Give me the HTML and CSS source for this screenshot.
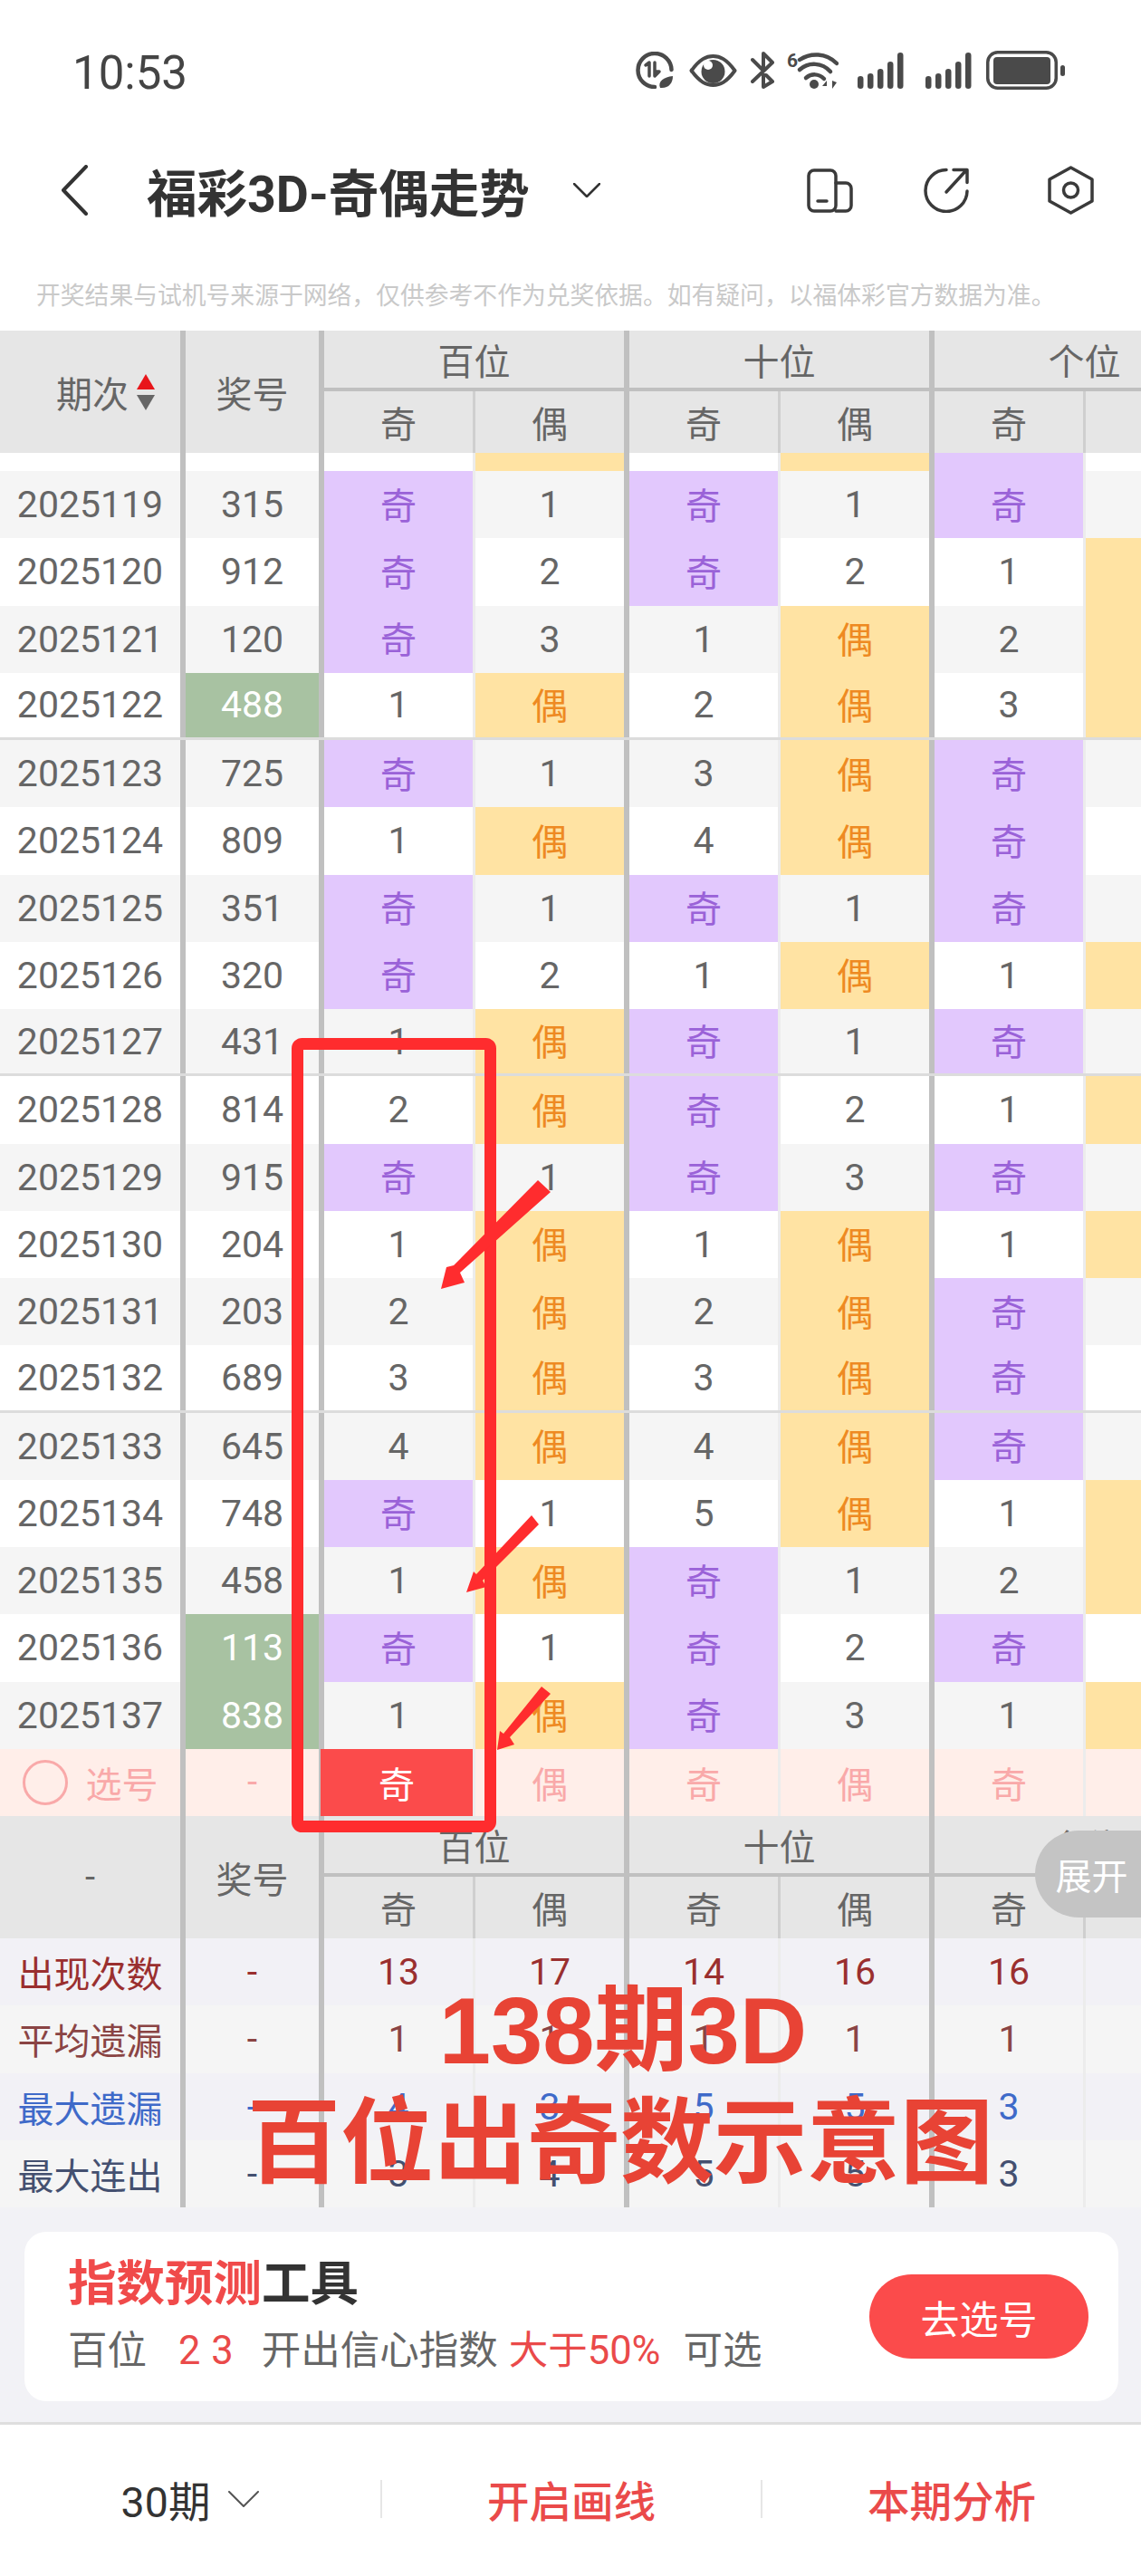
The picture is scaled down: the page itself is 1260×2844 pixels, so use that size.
FILE: index.html
```html
<!DOCTYPE html>
<html lang="zh-CN">
<head>
    <meta charset="UTF-8">
    <meta name="viewport" content="width=device-width, initial-scale=1.0">
    <title>福彩3D-奇偶走势</title>
    <link rel="stylesheet" href="styles.css">
</head>
<body>
<div class="page">

    <!-- status bar -->
    <div class="status">
        <span class="time">10:53</span>
        <div class="status-icons">
            <svg class="ic-saver" width="42" height="41" viewBox="0 0 42 41" fill="none" stroke="#4a4a4a" stroke-width="4.5" stroke-linecap="round" stroke-linejoin="round">
                <path d="M21 39A18.5 18.5 0 1 1 39.500 20"/>
                <path d="M11 15l4-3v15M21 12v15l5-5h-5" stroke-width="3.500"/>
                <path d="M27 40c-3-7 4-12 14-13 0 8-5 14-14 13z" fill="#4a4a4a" stroke="none"/>
            </svg>
            <svg class="ic-eye" width="53" height="36" viewBox="0 0 53 36" fill="none" stroke="#4a4a4a" stroke-width="4">
                <path d="M2.500 18C12 5 19 2 26.500 2S41 5 50.500 18C41 31 34 34 26.500 34S12 31 2.500 18z" stroke-linejoin="round"/>
                <circle cx="26.500" cy="19" r="13" fill="#4a4a4a" stroke="none"/>
                <circle cx="21" cy="12" r="5" fill="#fff" stroke="none"/>
            </svg>
            <svg width="26" height="41" viewBox="0 0 26 41" fill="none" stroke="#4a4a4a" stroke-width="4" stroke-linecap="round" stroke-linejoin="round">
                <path d="M2 9l12 12V2l10 10L2 33"/>
                <path d="M14 26v13l10-6-7-7z"/>
            </svg>
            <svg class="ic-wifi" width="57" height="41" viewBox="0 0 57 41" fill="none" stroke="#4a4a4a" stroke-width="4.500" stroke-linecap="round">
                <text class="wifi-six" x="0" y="17">6</text>
                <path d="M14 9C26 1 43 1 55 13"/>
                <path d="M14 20C24 11 39 12 48 22"/>
                <path d="M21 29c6-5 14-5 20 1"/>
                <circle cx="30" cy="36" r="5" fill="#4a4a4a" stroke="none"/>
                <path d="M44 32l-5 6h5zM50 32v9l5-7z" fill="#4a4a4a" stroke="none"/>
            </svg>
            <svg class="ic-signal" width="51" height="41" viewBox="0 0 51 41" fill="#4a4a4a">
                <rect x="0" y="27" width="6.500" height="14" rx="3.200"/>
                <rect x="11" y="24" width="6.500" height="17" rx="3.200"/>
                <rect x="22" y="19" width="6.500" height="22" rx="3.200"/>
                <rect x="33" y="11" width="6.500" height="30" rx="3.200"/>
                <rect x="44" y="1" width="6.500" height="40" rx="3.200"/>
            </svg>
            <svg class="ic-signal ic-signal-two" width="51" height="41" viewBox="0 0 51 41" fill="#4a4a4a">
                <rect x="0" y="27" width="6.500" height="14" rx="3.200"/>
                <rect x="11" y="24" width="6.500" height="17" rx="3.200"/>
                <rect x="22" y="19" width="6.500" height="22" rx="3.200"/>
                <rect x="33" y="11" width="6.500" height="30" rx="3.200"/>
                <rect x="44" y="1" width="6.500" height="40" rx="3.200"/>
            </svg>
            <svg class="ic-battery" width="87" height="43" viewBox="0 0 87 43" fill="#4a4a4a">
                <rect x="1.750" y="1.750" width="75.500" height="39.500" rx="11" fill="none" stroke="#4a4a4a" stroke-width="3.500"/>
                <rect x="8" y="7" width="63" height="30" rx="4"/>
                <rect x="82" y="16" width="5" height="12" rx="2.500"/>
            </svg>
        </div>
    </div>

    <!-- title bar -->
    <div class="nav">
        <svg class="nav-back" width="30" height="56" viewBox="0 0 30 56" fill="none" stroke="#333" stroke-width="4" stroke-linecap="round" stroke-linejoin="round">
            <path d="M28 2L3 28l25 26"/>
        </svg>
        <h1 class="nav-title">福彩3D-奇偶走势</h1>
        <svg class="nav-drop" width="30" height="16" viewBox="0 0 30 16" fill="none" stroke="#333" stroke-width="2.500" stroke-linecap="round" stroke-linejoin="round">
            <path d="M1 1l14 14L29 1"/>
        </svg>
        <div class="nav-tools">
            <svg width="51" height="49" viewBox="0 0 51 49" fill="none" stroke="#3a3a3a" stroke-width="3.500" stroke-linecap="round">
                <rect x="2" y="2" width="30" height="45" rx="6"/>
                <path d="M32 16h11a6 6 0 0 1 6 6v19a6 6 0 0 1-6 6H32"/>
                <path d="M12 36h10"/>
            </svg>
            <svg width="50" height="50" viewBox="0 0 50 50" fill="none" stroke="#3a3a3a" stroke-width="3.500" stroke-linecap="round" stroke-linejoin="round">
                <path d="M25 2.500A23 23 0 1 0 48 26"/>
                <path d="M25 27L47 3M33 2.500h15v14"/>
            </svg>
            <svg class="nav-hex" width="51" height="54" viewBox="0 0 51 54" fill="none" stroke="#3a3a3a" stroke-width="3.500" stroke-linejoin="round">
                <path d="M25.500 2L49 15v24L25.500 52 2 39V15z"/>
                <circle cx="25.500" cy="27" r="8"/>
            </svg>
        </div>
    </div>

    <p class="note">开奖结果与试机号来源于网络，仅供参考不作为兑奖依据。如有疑问，以福体彩官方数据为准。</p>

    <!-- trend table head -->
    <div class="head">
        <div class="head-side head-period">期次<span class="sort"><i class="sort-up"></i><i class="sort-down"></i></span></div>
        <div class="head-side">奖号</div>
        <div class="group"><div class="group-name">百位</div><div class="group-sub"><span>奇</span><span>偶</span></div></div>
        <div class="group"><div class="group-name">十位</div><div class="group-sub"><span>奇</span><span>偶</span></div></div>
        <div class="group"><div class="group-name">个位</div><div class="group-sub"><span>奇</span><span></span></div></div>
    </div>

    <!-- trend rows -->
    <div class="body">
        <div class="row row-cut"><div></div><div></div><div></div><div class="even"></div><div></div><div class="even"></div><div class="odd"></div><div></div></div>
        <div class="row"><div>2025119</div><div>315</div><div class="odd">奇</div><div>1</div><div class="odd">奇</div><div>1</div><div class="odd">奇</div><div></div></div>
        <div class="row"><div>2025120</div><div>912</div><div class="odd">奇</div><div>2</div><div class="odd">奇</div><div>2</div><div>1</div><div class="even"></div></div>
        <div class="row"><div>2025121</div><div>120</div><div class="odd">奇</div><div>3</div><div>1</div><div class="even">偶</div><div>2</div><div class="even"></div></div>
        <div class="row sep"><div>2025122</div><div class="hit">488</div><div>1</div><div class="even">偶</div><div>2</div><div class="even">偶</div><div>3</div><div class="even"></div></div>
        <div class="row"><div>2025123</div><div>725</div><div class="odd">奇</div><div>1</div><div>3</div><div class="even">偶</div><div class="odd">奇</div><div></div></div>
        <div class="row"><div>2025124</div><div>809</div><div>1</div><div class="even">偶</div><div>4</div><div class="even">偶</div><div class="odd">奇</div><div></div></div>
        <div class="row"><div>2025125</div><div>351</div><div class="odd">奇</div><div>1</div><div class="odd">奇</div><div>1</div><div class="odd">奇</div><div></div></div>
        <div class="row"><div>2025126</div><div>320</div><div class="odd">奇</div><div>2</div><div>1</div><div class="even">偶</div><div>1</div><div class="even"></div></div>
        <div class="row sep"><div>2025127</div><div>431</div><div>1</div><div class="even">偶</div><div class="odd">奇</div><div>1</div><div class="odd">奇</div><div></div></div>
        <div class="row"><div>2025128</div><div>814</div><div>2</div><div class="even">偶</div><div class="odd">奇</div><div>2</div><div>1</div><div class="even"></div></div>
        <div class="row"><div>2025129</div><div>915</div><div class="odd">奇</div><div>1</div><div class="odd">奇</div><div>3</div><div class="odd">奇</div><div></div></div>
        <div class="row"><div>2025130</div><div>204</div><div>1</div><div class="even">偶</div><div>1</div><div class="even">偶</div><div>1</div><div class="even"></div></div>
        <div class="row"><div>2025131</div><div>203</div><div>2</div><div class="even">偶</div><div>2</div><div class="even">偶</div><div class="odd">奇</div><div></div></div>
        <div class="row sep"><div>2025132</div><div>689</div><div>3</div><div class="even">偶</div><div>3</div><div class="even">偶</div><div class="odd">奇</div><div></div></div>
        <div class="row"><div>2025133</div><div>645</div><div>4</div><div class="even">偶</div><div>4</div><div class="even">偶</div><div class="odd">奇</div><div></div></div>
        <div class="row"><div>2025134</div><div>748</div><div class="odd">奇</div><div>1</div><div>5</div><div class="even">偶</div><div>1</div><div class="even"></div></div>
        <div class="row"><div>2025135</div><div>458</div><div>1</div><div class="even">偶</div><div class="odd">奇</div><div>1</div><div>2</div><div class="even"></div></div>
        <div class="row"><div>2025136</div><div class="hit">113</div><div class="odd">奇</div><div>1</div><div class="odd">奇</div><div>2</div><div class="odd">奇</div><div></div></div>
        <div class="row"><div>2025137</div><div class="hit">838</div><div>1</div><div class="even">偶</div><div class="odd">奇</div><div>3</div><div>1</div><div class="even"></div></div>
        <div class="row row-pick">
            <div class="pick-label"><i class="pick-dot"></i>选号</div>
            <div>-</div>
            <div class="picked">奇</div><div>偶</div><div>奇</div><div>偶</div><div>奇</div><div></div>
        </div>
    </div>

    <!-- stats head -->
    <div class="head head-foot">
        <div class="head-side">-</div>
        <div class="head-side">奖号</div>
        <div class="group"><div class="group-name">百位</div><div class="group-sub"><span>奇</span><span>偶</span></div></div>
        <div class="group"><div class="group-name">十位</div><div class="group-sub"><span>奇</span><span>偶</span></div></div>
        <div class="group"><div class="group-name">个位</div><div class="group-sub"><span>奇</span><span></span></div></div>
        <div class="expand">展开</div>
    </div>

    <div class="stats">
        <div class="row stat-count"><div>出现次数</div><div>-</div><div>13</div><div>17</div><div>14</div><div>16</div><div>16</div><div></div></div>
        <div class="row stat-avg"><div>平均遗漏</div><div>-</div><div>1</div><div>1</div><div>1</div><div>1</div><div>1</div><div></div></div>
        <div class="row stat-miss"><div>最大遗漏</div><div>-</div><div>4</div><div>3</div><div>5</div><div>5</div><div>3</div><div></div></div>
        <div class="row stat-run"><div>最大连出</div><div>-</div><div>3</div><div>4</div><div>5</div><div>5</div><div>3</div><div></div></div>
    </div>

    <!-- tool card -->
    <div class="tray">
        <div class="card">
            <div class="card-text">
                <div class="card-title"><span class="red">指数预测</span>工具</div>
                <div class="card-sub">
                    <span>百位</span>
                    <span class="red nums">2 3</span>
                    <span>开出信心指数</span>
                    <span class="red card-more">大于50%</span>
                    <span class="card-last">可选</span>
                </div>
            </div>
            <div class="card-btn">去选号</div>
        </div>
    </div>

    <!-- bottom bar -->
    <div class="bar">
        <div class="bar-item bar-period">30期
            <svg width="34" height="18" viewBox="0 0 34 18" fill="none" stroke="#555" stroke-width="2" stroke-linecap="round" stroke-linejoin="round"><path d="M1 1l16 16L33 1"/></svg>
        </div>
        <div class="bar-item red">开启画线</div>
        <div class="bar-item red">本期分析</div>
    </div>

    <!-- hand drawn marks on top of the screenshot -->
    <svg class="marks" width="1260" height="2844" viewBox="0 0 1260 2844">
        <rect x="328.500" y="1152.500" width="213" height="864" rx="5" fill="none" stroke="#ff2c2e" stroke-width="13"/>
        <path d="M594 1303L608 1316 508 1405 513 1416 487 1423 493 1399 501 1397z" fill="#ff2c2e"/>
        <path d="M587 1673L595 1683 533 1745 537 1752 515 1758 523 1735 526 1738z" fill="#ff2c2e"/>
        <path d="M598 1862L608 1870 563 1918 568 1926 549 1932 552 1911 556 1914z" fill="#ff2c2e"/>
    </svg>
    <div class="banner">
        <div class="banner-top">138期3D</div>
        <div>百位出奇数示意图</div>
    </div>
</div>
</body>
</html>
```

FILE: styles.css
```css
* {
    box-sizing: border-box;
}

body {
    margin: 0;
    font-family: Roboto, "Noto Sans CJK SC", sans-serif;
    color: #666;
    background: #fff;
}

.page {
    position: relative;
    width: 1260px;
    height: 2844px;
    overflow: hidden;
}

.red {
    color: #ea4a4a;
}

/* Status bar */
.status {
    height: 160px;
    padding: 0 84px 0 80px;
    display: flex;
    align-items: center;
    justify-content: space-between;
}

.time {
    font-size: 51px;
    color: #444;
}

.status-icons {
    margin-bottom: 5px;
    display: flex;
    align-items: center;
    gap: 15px;
}

.ic-eye {
    margin-left: 2px;
}

.ic-wifi {
    margin-left: -1px;
}

.ic-signal {
    margin-left: 6px;
}

.ic-signal-two {
    margin-left: 9px;
}

.ic-battery {
    margin-left: 1px;
}

.wifi-six {
    font-size: 21px;
    font-weight: 700;
    fill: #4a4a4a;
    stroke: none;
}

/* Title bar */
.nav {
    height: 100px;
    padding: 0 52px 0 67px;
    display: flex;
    align-items: center;
}

.nav-title {
    margin: 0 0 0 65px;
    font-size: 55.500px;
    font-weight: 700;
    color: #333;
}

.nav-drop {
    margin-left: 48px;
}

.nav-tools {
    margin-left: auto;
    display: flex;
    align-items: center;
    gap: 78px;
}

.nav-hex {
    margin-left: 9px;
}

.note {
    height: 105px;
    margin: 0;
    padding: 50px 0 0 40px;
    font-size: 26.800px;
    line-height: 34px;
    color: #c9c9c9;
    white-space: nowrap;
}

/* Table head */
.head {
    position: relative;
    height: 135px;
    display: flex;
    background: #e6e6e6;
    font-size: 40px;
    color: #666;
}

.head-side {
    flex: 0 0 153px;
    display: flex;
    align-items: center;
    justify-content: center;
    border-right: 6px solid #c0c0c0;
}

.head-side:first-child {
    flex-basis: 205px;
}

.head-period {
    justify-content: flex-start;
    padding-left: 62px;
}

.sort {
    margin-left: 9px;
    display: flex;
    flex-direction: column;
    gap: 6px;
}

.sort i {
    display: block;
    width: 0;
    height: 0;
    border-left: 10px solid transparent;
    border-right: 10px solid transparent;
}

.sort-up {
    border-bottom: 17px solid #e8151a;
}

.sort-down {
    border-top: 17px solid #666;
}

.group {
    flex: 0 0 337px;
    display: flex;
    flex-direction: column;
    border-right: 6px solid #c0c0c0;
}

.group-name {
    height: 67px;
    display: flex;
    align-items: center;
    justify-content: center;
    border-bottom: 4px solid #c0c0c0;
}

.group-sub {
    flex: 1;
    display: flex;
}

.group-sub span {
    display: flex;
    align-items: center;
    justify-content: center;
}

.group-sub span:first-child {
    width: 167px;
    border-right: 3px solid #cfcfcf;
}

.group-sub span:last-child {
    flex: 1;
}

.expand {
    position: absolute;
    top: 16px;
    right: 0;
    width: 117px;
    height: 96px;
    padding-left: 8px;
    display: flex;
    align-items: center;
    justify-content: center;
    border-radius: 48px 0 0 48px;
    background: #c4c4c4;
    color: #fff;
    font-size: 40px;
}

/* Table rows */
.row {
    display: grid;
    grid-template-columns: 205px 153px 167px 170px 167px 170px 167px 170px;
    height: 74.260px;
    font-size: 41px;
    background: #fff;
}

.row > div {
    display: flex;
    align-items: center;
    justify-content: center;
    border-right: 3px solid #ececec;
}

.row > div:first-child,
.row > div:nth-child(even) {
    border-right: 6px solid #c0c0c0;
}

.body .row:nth-child(even),
.stats .row:nth-child(even) {
    background: #f5f5f5;
}

.row-cut {
    height: 20px;
}

.row.sep {
    border-bottom: 3px solid #dcdcdc;
}

.row .odd {
    padding-bottom: 3px;
    background: #e2c8fd;
    color: #9a62d8;
    font-size: 40px;
}

.row .even {
    padding-bottom: 3px;
    background: #ffe3a3;
    color: #ee8a22;
    font-size: 40px;
}

.row .hit {
    background: #a8c2a2;
    color: #fff;
}

.body .row-pick {
    background: #ffeee9;
    color: #f9a9a9;
    font-size: 40px;
}

.pick-label {
    gap: 20px;
}

.pick-dot {
    width: 50px;
    height: 50px;
    border: 3px solid #f9a9a9;
    border-radius: 50%;
}

.row .picked {
    margin-left: -4px;
    background: #fb4b4b;
    color: #fff;
}

/* Stats rows */
.stats .row {
    height: 74.250px;
    background: #f2f1f6;
}

.stat-count {
    color: #9a2f2f;
}

.stat-avg {
    color: #8a4444;
}

.stat-miss {
    color: #3f6ac9;
}

.stat-run {
    color: #445070;
}

.stats .row > div:first-child {
    font-size: 40px;
}

/* Tool card */
.tray {
    height: 240px;
    padding: 27px 25px 0 27px;
    background: #f2f2f6;
    border-bottom: 3px solid #dedede;
}

.card {
    height: 187px;
    padding: 0 33px 0 48px;
    display: flex;
    align-items: center;
    justify-content: space-between;
    background: #fff;
    border-radius: 24px;
}

.card-text {
    padding-top: 3px;
}

.card-title {
    font-size: 53.500px;
    font-weight: 700;
    line-height: 74px;
    color: #333;
}

.card-title .red {
    color: #f04a4a;
}

.card-sub {
    display: flex;
    gap: 16px;
    font-size: 43.500px;
    line-height: 74px;
    color: #666;
}

.nums {
    margin: 0 15px 0 19px;
    word-spacing: 1px;
}

.card-more {
    margin-left: -4px;
}

.card-last {
    margin-left: 9px;
}

.card-btn {
    width: 242px;
    height: 93px;
    display: flex;
    align-items: center;
    justify-content: center;
    border-radius: 47px;
    background: #fb4b4b;
    color: #fff;
    font-size: 43px;
}

/* Bottom bar */
.bar {
    height: 167px;
    display: grid;
    grid-template-columns: 420px 420px 420px;
    align-items: center;
    padding-bottom: 4px;
}

.bar-item {
    height: 42px;
    display: flex;
    align-items: center;
    justify-content: center;
    border-left: 2px solid #e6e6e6;
    font-size: 46.500px;
    font-weight: 500;
}

.bar-period {
    border-left: 0;
    gap: 20px;
    color: #333;
    font-weight: 400;
}

/* Hand drawn marks */
.marks {
    position: absolute;
    top: 0;
    left: 0;
}

.banner {
    position: absolute;
    top: 2181px;
    left: 110px;
    width: 1150px;
    text-align: center;
    font-family: "Liberation Sans", "Noto Sans CJK SC", sans-serif;
    font-size: 103px;
    font-weight: 700;
    line-height: 124px;
    color: #e84335;
}

.banner-top {
    padding-left: 6px;
}
```
